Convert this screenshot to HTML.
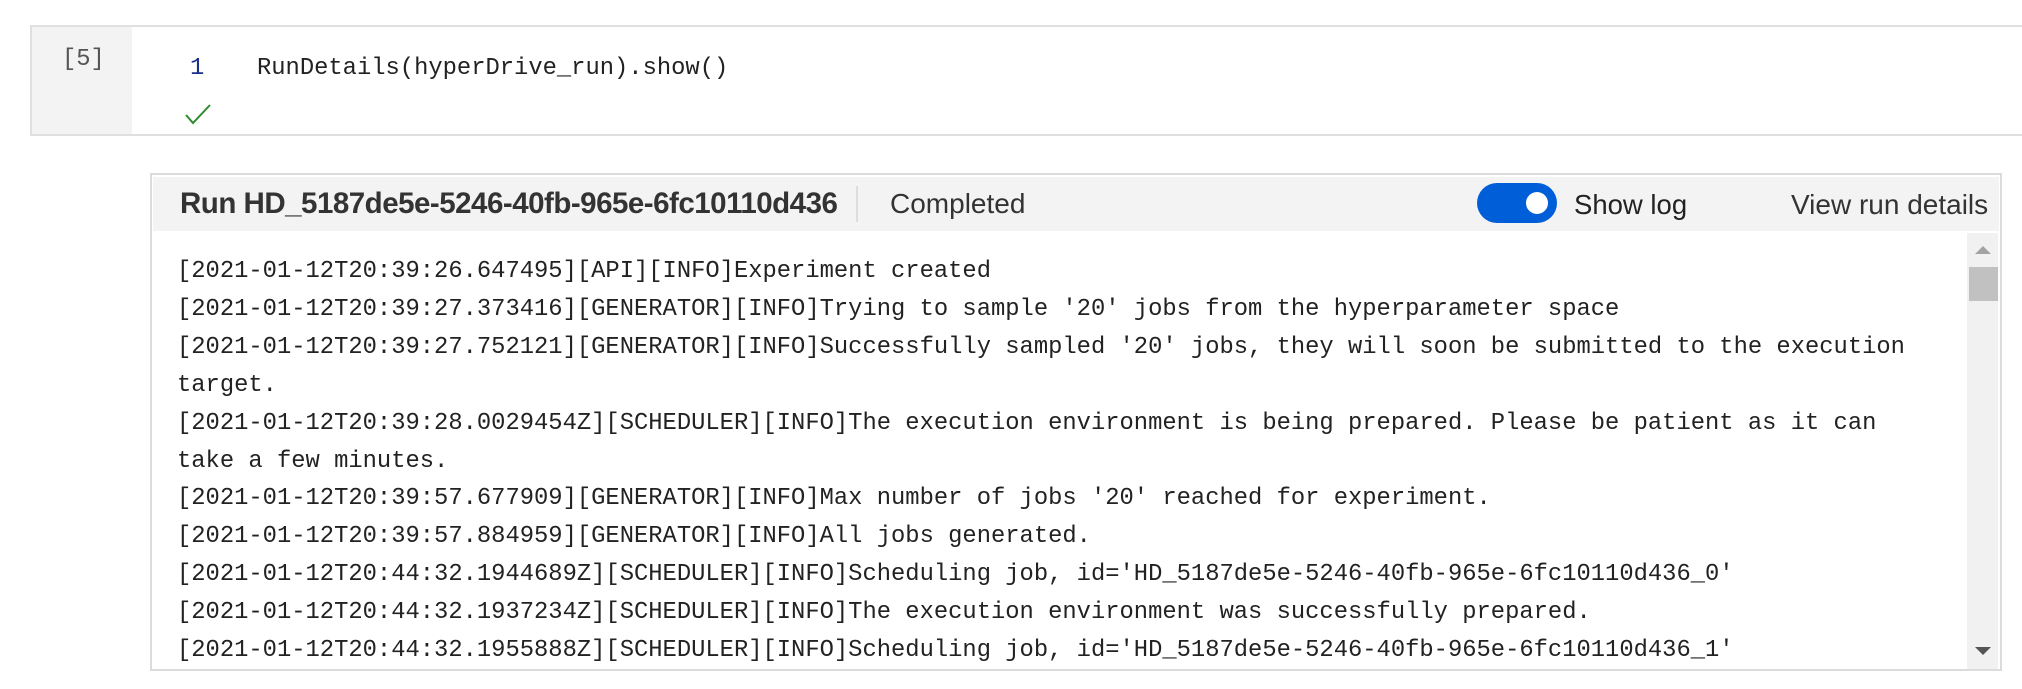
<!DOCTYPE html>
<html><head><meta charset="utf-8"><style>
*{margin:0;padding:0;box-sizing:border-box}
body{width:2022px;height:689px;background:#fff;position:relative;overflow:hidden;font-family:"Liberation Sans",sans-serif;color:#222}
.abs{position:absolute}
.mono{font-family:"Liberation Mono",monospace;font-size:23.8px;white-space:pre;color:#222}
.hd{line-height:34px}
</style></head><body>
<div class="abs" style="left:30px;top:25px;width:2000px;height:111px;border:2px solid #e0e0e0;background:#fff"></div>
<div class="abs" style="left:32px;top:27px;width:100px;height:107px;background:#f3f3f3"></div>
<div class="abs mono" style="left:62px;top:46px;color:#555">[5]</div>
<div class="abs mono" style="left:190px;top:55px;color:#1a2f8a">1</div>
<div class="abs mono" style="left:257px;top:55px">RunDetails(hyperDrive_run).show()</div>
<svg class="abs" style="left:184px;top:103px" width="28" height="22" viewBox="0 0 28 22"><path d="M2 12 L9 20 L26 2" fill="none" stroke="#2e8b2e" stroke-width="2"/></svg>

<div class="abs" style="left:150px;top:173px;width:1852px;height:498px;border:2px solid #dcdcdc;background:#fff"></div>
<div class="abs" style="left:153px;top:177px;width:1846px;height:54px;background:#f3f3f3"></div>
<div class="abs hd" style="left:180px;top:187px;font-size:29.5px;font-weight:bold;color:#333;letter-spacing:-0.5px">Run HD_5187de5e-5246-40fb-965e-6fc10110d436</div>
<div class="abs" style="left:856px;top:186px;width:2px;height:36px;background:#ddd"></div>
<div class="abs hd" style="left:890px;top:187px;font-size:28px;color:#333">Completed</div>
<div class="abs" style="left:1477px;top:183px;width:80px;height:40px;border-radius:20px;background:#005fd8"></div>
<div class="abs" style="left:1526px;top:192px;width:22px;height:22px;border-radius:50%;background:#fff"></div>
<div class="abs hd" style="left:1574px;top:188px;font-size:27.5px;color:#222">Show log</div>
<div class="abs hd" style="left:1791px;top:188px;font-size:28px;color:#333">View run details</div>

<div class="abs" style="left:1967px;top:233px;width:31px;height:436px;background:#f1f1f1"></div>
<div class="abs" style="left:1969px;top:267px;width:29px;height:34px;background:#c1c1c1"></div>
<div class="abs" style="left:1975px;top:246px;width:0;height:0;border-left:8px solid transparent;border-right:8px solid transparent;border-bottom:8px solid #a3a3a3"></div>
<div class="abs" style="left:1975px;top:647px;width:0;height:0;border-left:8px solid transparent;border-right:8px solid transparent;border-top:8px solid #555"></div>

<div class="abs mono" style="left:177px;top:253px;line-height:37.9px">[2021-01-12T20:39:26.647495][API][INFO]Experiment created
[2021-01-12T20:39:27.373416][GENERATOR][INFO]Trying to sample '20' jobs from the hyperparameter space
[2021-01-12T20:39:27.752121][GENERATOR][INFO]Successfully sampled '20' jobs, they will soon be submitted to the execution
target.
[2021-01-12T20:39:28.0029454Z][SCHEDULER][INFO]The execution environment is being prepared. Please be patient as it can
take a few minutes.
[2021-01-12T20:39:57.677909][GENERATOR][INFO]Max number of jobs '20' reached for experiment.
[2021-01-12T20:39:57.884959][GENERATOR][INFO]All jobs generated.
[2021-01-12T20:44:32.1944689Z][SCHEDULER][INFO]Scheduling job, id='HD_5187de5e-5246-40fb-965e-6fc10110d436_0'
[2021-01-12T20:44:32.1937234Z][SCHEDULER][INFO]The execution environment was successfully prepared.
[2021-01-12T20:44:32.1955888Z][SCHEDULER][INFO]Scheduling job, id='HD_5187de5e-5246-40fb-965e-6fc10110d436_1'</div>
<div class="abs" style="left:152px;top:669px;width:1850px;height:20px;background:#fff"></div>
<div class="abs" style="left:150px;top:669px;width:1852px;height:2px;background:#dcdcdc"></div>
</body></html>
